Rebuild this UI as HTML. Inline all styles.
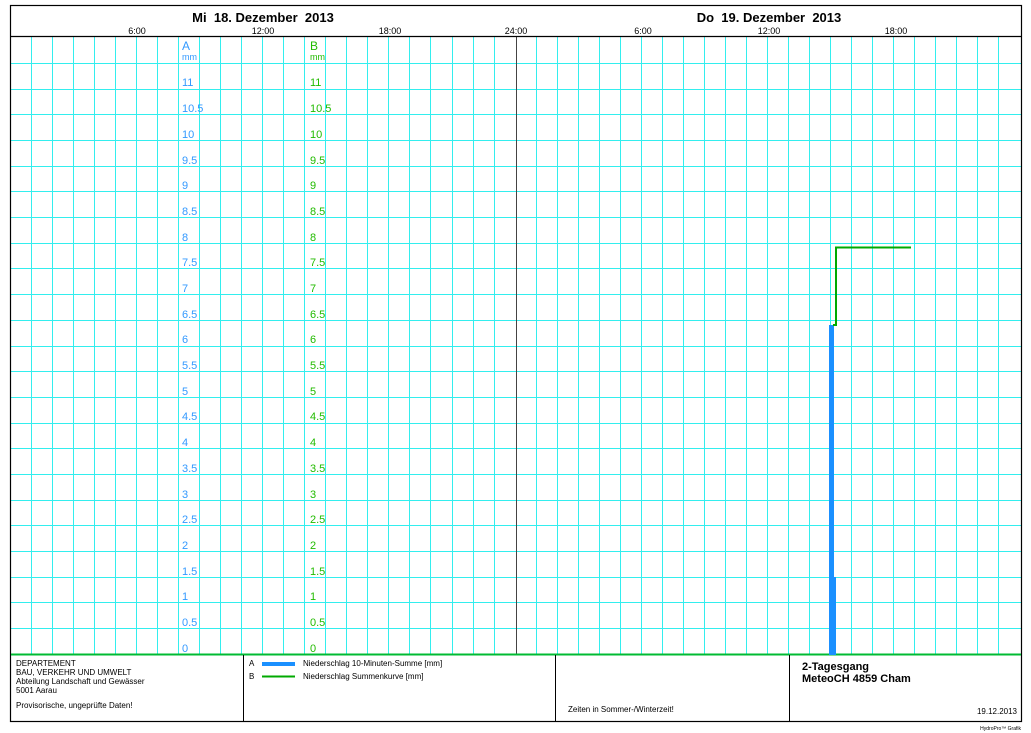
<!DOCTYPE html>
<html><head><meta charset="utf-8"><style>
html,body{margin:0;padding:0;background:#fff;width:1031px;height:733px;overflow:hidden}
svg{display:block}
text{font-family:"Liberation Sans",Arial,sans-serif}
</style></head><body>
<svg width="1031" height="733" viewBox="0 0 1031 733" xmlns="http://www.w3.org/2000/svg">
<g stroke="#33eeee" stroke-width="1" shape-rendering="crispEdges">
<path d="M31.5 37V654M52.5 37V654M73.5 37V654M94.5 37V654M115.5 37V654M136.5 37V654M157.5 37V654M178.5 37V654M199.5 37V654M220.5 37V654M241.5 37V654M262.5 37V654M283.5 37V654M304.5 37V654M325.5 37V654M346.5 37V654M367.5 37V654M388.5 37V654M409.5 37V654M430.5 37V654M452.5 37V654M473.5 37V654M494.5 37V654M536.5 37V654M557.5 37V654M578.5 37V654M599.5 37V654M620.5 37V654M641.5 37V654M662.5 37V654M683.5 37V654M704.5 37V654M725.5 37V654M746.5 37V654M767.5 37V654M788.5 37V654M809.5 37V654M830.5 37V654M851.5 37V654M872.5 37V654M893.5 37V654M914.5 37V654M935.5 37V654M956.5 37V654M977.5 37V654M998.5 37V654"/>
<path d="M11 628.5H1021M11 602.5H1021M11 577.5H1021M11 551.5H1021M11 525.5H1021M11 500.5H1021M11 474.5H1021M11 448.5H1021M11 423.5H1021M11 397.5H1021M11 371.5H1021M11 346.5H1021M11 320.5H1021M11 294.5H1021M11 268.5H1021M11 243.5H1021M11 217.5H1021M11 191.5H1021M11 166.5H1021M11 140.5H1021M11 114.5H1021M11 89.5H1021M11 63.5H1021"/>
</g>
<line x1="516.5" y1="36" x2="516.5" y2="654" stroke="#444" stroke-width="1" shape-rendering="crispEdges"/>
<rect x="10.5" y="5.5" width="1011" height="716" fill="none" stroke="#000" stroke-width="1.2"/>
<line x1="10" y1="36.5" x2="1022" y2="36.5" stroke="#000" stroke-width="1.2"/>
<line x1="11" y1="654.5" x2="1021" y2="654.5" stroke="#00bb33" stroke-width="2"/>
<line x1="243.5" y1="655" x2="243.5" y2="721" stroke="#000"/>
<line x1="555.5" y1="655" x2="555.5" y2="721" stroke="#000"/>
<line x1="789.5" y1="655" x2="789.5" y2="721" stroke="#000"/>
<text x="263" y="22" font-size="13" font-weight="bold" text-anchor="middle">Mi&#160; 18. Dezember&#160; 2013</text>
<text x="769" y="22" font-size="13" font-weight="bold" text-anchor="middle">Do&#160; 19. Dezember&#160; 2013</text>
<g font-size="9" text-anchor="middle" fill="#000">
<text x="137" y="34">6:00</text><text x="263" y="34">12:00</text><text x="390" y="34">18:00</text>
<text x="516" y="34">24:00</text><text x="643" y="34">6:00</text><text x="769" y="34">12:00</text><text x="896" y="34">18:00</text>
</g>
<g fill="#3399ff" font-size="11">
<text x="182" y="50" font-size="12">A</text><text x="182" y="60" font-size="9">mm</text>
<text x="182" y="86">11</text><text x="182" y="112">10.5</text><text x="182" y="138">10</text><text x="182" y="164">9.5</text>
<text x="182" y="189">9</text><text x="182" y="215">8.5</text><text x="182" y="241">8</text><text x="182" y="266">7.5</text>
<text x="182" y="292">7</text><text x="182" y="318">6.5</text><text x="182" y="343">6</text><text x="182" y="369">5.5</text>
<text x="182" y="395">5</text><text x="182" y="420">4.5</text><text x="182" y="446">4</text><text x="182" y="472">3.5</text>
<text x="182" y="498">3</text><text x="182" y="523">2.5</text><text x="182" y="549">2</text><text x="182" y="575">1.5</text>
<text x="182" y="600">1</text><text x="182" y="626">0.5</text><text x="182" y="652">0</text>
</g>
<g fill="#22bb00" font-size="11">
<text x="310" y="50" font-size="12">B</text><text x="310" y="60" font-size="9">mm</text>
<text x="310" y="86">11</text><text x="310" y="112">10.5</text><text x="310" y="138">10</text><text x="310" y="164">9.5</text>
<text x="310" y="189">9</text><text x="310" y="215">8.5</text><text x="310" y="241">8</text><text x="310" y="266">7.5</text>
<text x="310" y="292">7</text><text x="310" y="318">6.5</text><text x="310" y="343">6</text><text x="310" y="369">5.5</text>
<text x="310" y="395">5</text><text x="310" y="420">4.5</text><text x="310" y="446">4</text><text x="310" y="472">3.5</text>
<text x="310" y="498">3</text><text x="310" y="523">2.5</text><text x="310" y="549">2</text><text x="310" y="575">1.5</text>
<text x="310" y="600">1</text><text x="310" y="626">0.5</text><text x="310" y="652">0</text>
</g>
<rect x="829" y="325" width="5" height="330" fill="#1a90ff"/>
<rect x="829" y="577" width="7" height="78" fill="#1a90ff"/>
<polyline points="833,325 836,325 836,247.5 911,247.5" fill="none" stroke="#00aa00" stroke-width="2"/>
<g font-size="8" fill="#000">
<text x="16" y="666">DEPARTEMENT</text>
<text x="16" y="675">BAU, VERKEHR UND UMWELT</text>
<text x="16" y="684">Abteilung Landschaft und Gewässer</text>
<text x="16" y="693">5001 Aarau</text>
<text x="16" y="708">Provisorische, ungeprüfte Daten!</text>
<text x="249" y="666">A</text><text x="249" y="679">B</text>
<text x="303" y="666">Niederschlag 10-Minuten-Summe [mm]</text>
<text x="303" y="679">Niederschlag Summenkurve [mm]</text>
<text x="568" y="712">Zeiten in Sommer-/Winterzeit!</text>
<text x="1017" y="714" text-anchor="end">19.12.2013</text>
<text x="1021" y="730" font-size="5" text-anchor="end">HydroPro™ Grafik</text>
</g>
<rect x="262" y="662" width="33" height="4" fill="#1a90ff"/>
<rect x="262" y="675.5" width="33" height="2" fill="#00aa00"/>
<text x="802" y="670" font-size="11" font-weight="bold">2-Tagesgang</text>
<text x="802" y="682" font-size="11" font-weight="bold">MeteoCH 4859 Cham</text>
</svg>
</body></html>
